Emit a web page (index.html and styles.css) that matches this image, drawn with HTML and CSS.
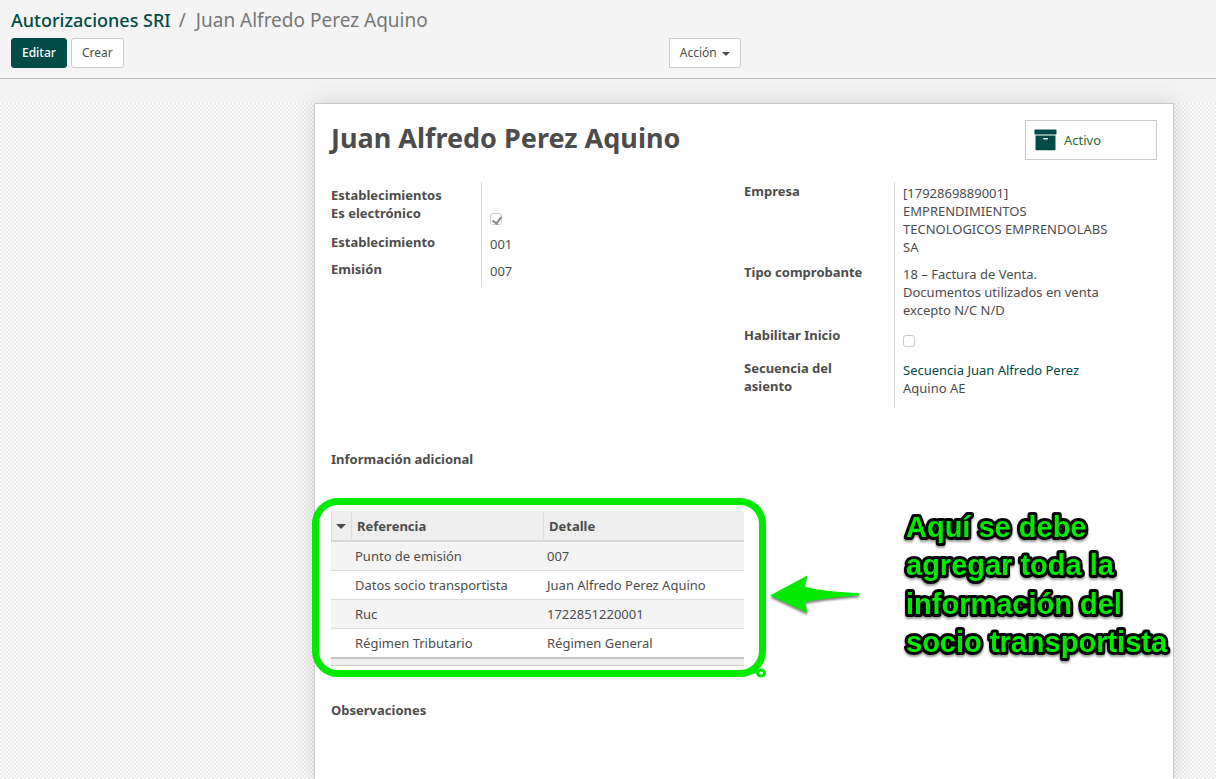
FILE: index.html
```html
<!DOCTYPE html>
<html lang="es">
<head>
<meta charset="utf-8">
<title>Juan Alfredo Perez Aquino - Autorizaciones SRI</title>
<link rel="stylesheet" href="styles.css">
</head>
<body>
<header class="panel">
  <nav class="crumbs"><a href="#">Autorizaciones SRI</a><span class="sep">/</span><span>Juan Alfredo Perez Aquino</span></nav>
  <div class="toolbar">
    <div class="actions">
      <button class="btn primary" type="button">Editar</button>
      <button class="btn" type="button">Crear</button>
    </div>
    <button class="btn menu" type="button">Acción <span class="caret"></span></button>
  </div>
</header>
<main class="view">
  <section class="sheet">
    <div class="head">
      <h1>Juan Alfredo Perez Aquino</h1>
      <button class="stat" type="button">
        <svg width="24" height="22" viewBox="0 0 24 22" aria-hidden="true"><rect x="0.5" y="0.5" width="22" height="5" rx="0.6"/><path d="M1.500 6.500h20v14q0 .8-.8.8H2.300q-.8 0-.8-.8z"/><rect class="slot" x="9" y="9" width="5" height="1.600" rx=".8"/></svg>
        <span>Activo</span>
      </button>
    </div>
    <div class="groups">
      <div class="group">
        <span class="label lead">Establecimientos</span><span class="value lead"></span>
        <label class="label" for="electronico">Es electrónico</label><span class="value check"><input type="checkbox" id="electronico" checked disabled></span>
        <span class="label">Establecimiento</span><span class="value">001</span>
        <span class="label">Emisión</span><span class="value">007</span>
      </div>
      <div class="group">
        <span class="label">Empresa</span><span class="value">[1792869889001] EMPRENDIMIENTOS TECNOLOGICOS EMPRENDOLABS SA</span>
        <span class="label">Tipo comprobante</span><span class="value">18 – Factura de Venta. Documentos utilizados en venta excepto N/C N/D</span>
        <label class="label" for="inicio">Habilitar Inicio</label><span class="value check wide"><input type="checkbox" id="inicio" disabled></span>
        <span class="label">Secuencia del asiento</span><span class="value last"><a href="#">Secuencia Juan Alfredo Perez</a> Aquino AE</span>
      </div>
    </div>
    <h2 class="info">Información adicional</h2>
    <div class="lines">
      <table>
        <thead><tr><th class="sort"><span class="caret"></span></th><th class="ref">Referencia</th><th>Detalle</th></tr></thead>
        <tbody>
          <tr><td></td><td>Punto de emisión</td><td>007</td></tr>
          <tr><td></td><td>Datos socio transportista</td><td>Juan Alfredo Perez Aquino</td></tr>
          <tr><td></td><td>Ruc</td><td>1722851220001</td></tr>
          <tr><td></td><td>Régimen Tributario</td><td>Régimen General</td></tr>
        </tbody>
        <tfoot><tr><td colspan="3"></td></tr></tfoot>
      </table>
      <div class="frame"></div>
      <svg class="loop" width="14" height="12" viewBox="0 0 14 12" aria-hidden="true"><path d="M0 6L4 4"/><ellipse cx="8" cy="6" rx="3.500" ry="3"/></svg>
      <svg class="arrow" width="94" height="46" viewBox="0 0 94 46" aria-hidden="true"><path d="M1 22.500L38.500 2.500L35.500 13.500C50 17.500 70 19.500 90 20V22.500C70 24 50 26 36 29L38.500 40z"/></svg>
      <svg class="note" width="270" height="156">
        <text x="4" y="29">Aquí se debe</text>
        <text x="4" y="67">agregar toda la</text>
        <text x="4" y="106">información del</text>
        <text x="4" y="144">socio transportista</text>
      </svg>
    </div>
    <h2 class="obs">Observaciones</h2>
  </section>
</main>
</body>
</html>
```
FILE: styles.css
```css
* { box-sizing: border-box; }
body {
  margin: 0;
  min-height: 100vh;
  display: flex;
  flex-direction: column;
  background: #f4f4f4;
  color: #4c4c4c;
  font: 13px/18px "Noto Sans", "Open Sans", sans-serif;
}
a { color: #004a47; text-decoration: none; }
.panel { padding: 8px 0 10px; border-bottom: 1px solid #bfbfbf; }
.crumbs {
  padding: 0 11px;
  font-size: 19px;
  line-height: 24px;
  color: #777;
}
.crumbs a { font-size: 18px; font-weight: 500; }
.sep { margin: 0 10px 0 8px; }
.toolbar { display: grid; grid-template-columns: 55% 1fr; margin-top: 6px; }
.actions { display: flex; gap: 4px; padding-left: 11px; }
.btn {
  height: 30px;
  padding: 0 10px;
  border: 1px solid #ccc;
  border-radius: 3px;
  background: #fff;
  color: #4c4c4c;
  font: 12px/18px "Noto Sans", "Open Sans", sans-serif;
}
.primary { background: #004a47; border-color: #004a47; color: #fff; font-weight: 500; }
.menu { justify-self: start; border-radius: 0 3px 3px 0; }
.menu .caret { margin-left: 2px; }
.caret {
  display: inline-block;
  border: 4px solid transparent;
  border-top: 4px solid #4c4c4c;
  border-bottom: 0;
  vertical-align: middle;
}
.view {
  flex: 1;
  display: flex;
  justify-content: flex-end;
  padding: 24px 42px 0 16px;
  background:
    linear-gradient(#f3f3f3, #f3f3f3) 0 0 / 100% 24px no-repeat,
    repeating-conic-gradient(#eaeaea 0 25%, #fdfdfd 0 50%) 0 0 / 4px 4px;
  overflow: hidden;
}
.sheet {
  width: 100%;
  max-width: 860px;
  padding: 16px;
  border: 1px solid #c8c8d3;
  border-bottom: 0;
  background: #fff;
  box-shadow: 0 0 20px rgba(0, 0, 0, .14);
}
.head { display: flex; justify-content: space-between; align-items: flex-start; }
h1 { margin: 0; font-size: 27px; line-height: 36px; }
.stat {
  display: flex;
  align-items: center;
  gap: 6px;
  width: 132px;
  height: 40px;
  padding: 0 8px;
  border: 1px solid #ccc;
  background: #fff;
  color: #2d6a35;
  font: 13px/18px "Noto Sans", "Open Sans", sans-serif;
}
.stat svg { fill: #004a47; }
.stat .slot { fill: #fff; }
.groups { display: grid; grid-template-columns: 1fr 1fr; align-items: start; margin-top: 22px; }
.group { display: grid; grid-template-columns: 150px 1fr; }
.label { padding-right: 16px; font-weight: 700; }
.label.lead { padding-top: 4px; }
.value { padding: 2px 40px 7px 8px; border-left: 1px solid #d6d6d6; }
.value.lead { padding: 0; }
.value.check { display: flex; padding-top: 9px; padding-bottom: 8px; }
.value.wide { padding-bottom: 12px; }
.value.last { padding-bottom: 11px; }
input {
  appearance: none;
  width: 12px;
  height: 12px;
  margin: 0;
  border: 1px solid #ccc;
  border-radius: 3px;
  background: #fff;
}
input:checked::after {
  content: "";
  display: block;
  width: 4px;
  height: 7px;
  margin: 1px 0 0 3px;
  border: solid #888;
  border-width: 0 2px 2px 0;
  transform: rotate(35deg);
}
h2 { margin: 0; font-size: 13px; line-height: 18px; }
.info { margin-top: 42px; }
.lines { position: relative; width: 50%; margin-top: 43px; }
table { width: 100%; table-layout: fixed; border-collapse: separate; border-spacing: 0; }
th, td { height: 29px; padding: 0 4px; text-align: left; border-bottom: 1px solid #ddd; }
th { height: 31px; padding: 0 5px; background: #eee; border-bottom: 2px solid #d9d9d9; border-left: 1px solid #ddd; }
th.sort { width: 20px; padding: 0 4px; line-height: 10px; }
th.ref { width: 192px; }
.sort .caret { border-width: 5px 5px 0; }
tbody tr:nth-child(odd) { background: #f4f4f4; }
tbody tr:last-child td { height: 30px; border-bottom: 2px solid #c4c4c4; }
tfoot td { height: 7px; padding: 0; background: #eee; border-bottom: 1px solid #ccc; }
.frame {
  position: absolute;
  inset: -13px -22px -11px -19px;
  border: 7px solid #00ea00;
  border-radius: 26px;
}
.loop { position: absolute; right: -23px; bottom: -13px; fill: none; stroke: #00ea00; stroke-width: 3; }
.arrow { position: absolute; left: calc(100% + 25px); top: 62px; fill: #00ea00; filter: drop-shadow(0 2px 1px rgba(0, 0, 0, .5)); overflow: visible; }
.note {
  position: absolute;
  left: calc(100% + 158px);
  top: -3px;
  overflow: visible;
  fill: #00ea00;
  font: bold 29px/38px "Liberation Sans", Arial, sans-serif;
  stroke: #000;
  stroke-width: 6px;
  stroke-linejoin: round;
  paint-order: stroke fill;
  filter: drop-shadow(0 2px 1px rgba(0, 0, 0, .4));
}
.obs { margin-top: 35px; }
```
